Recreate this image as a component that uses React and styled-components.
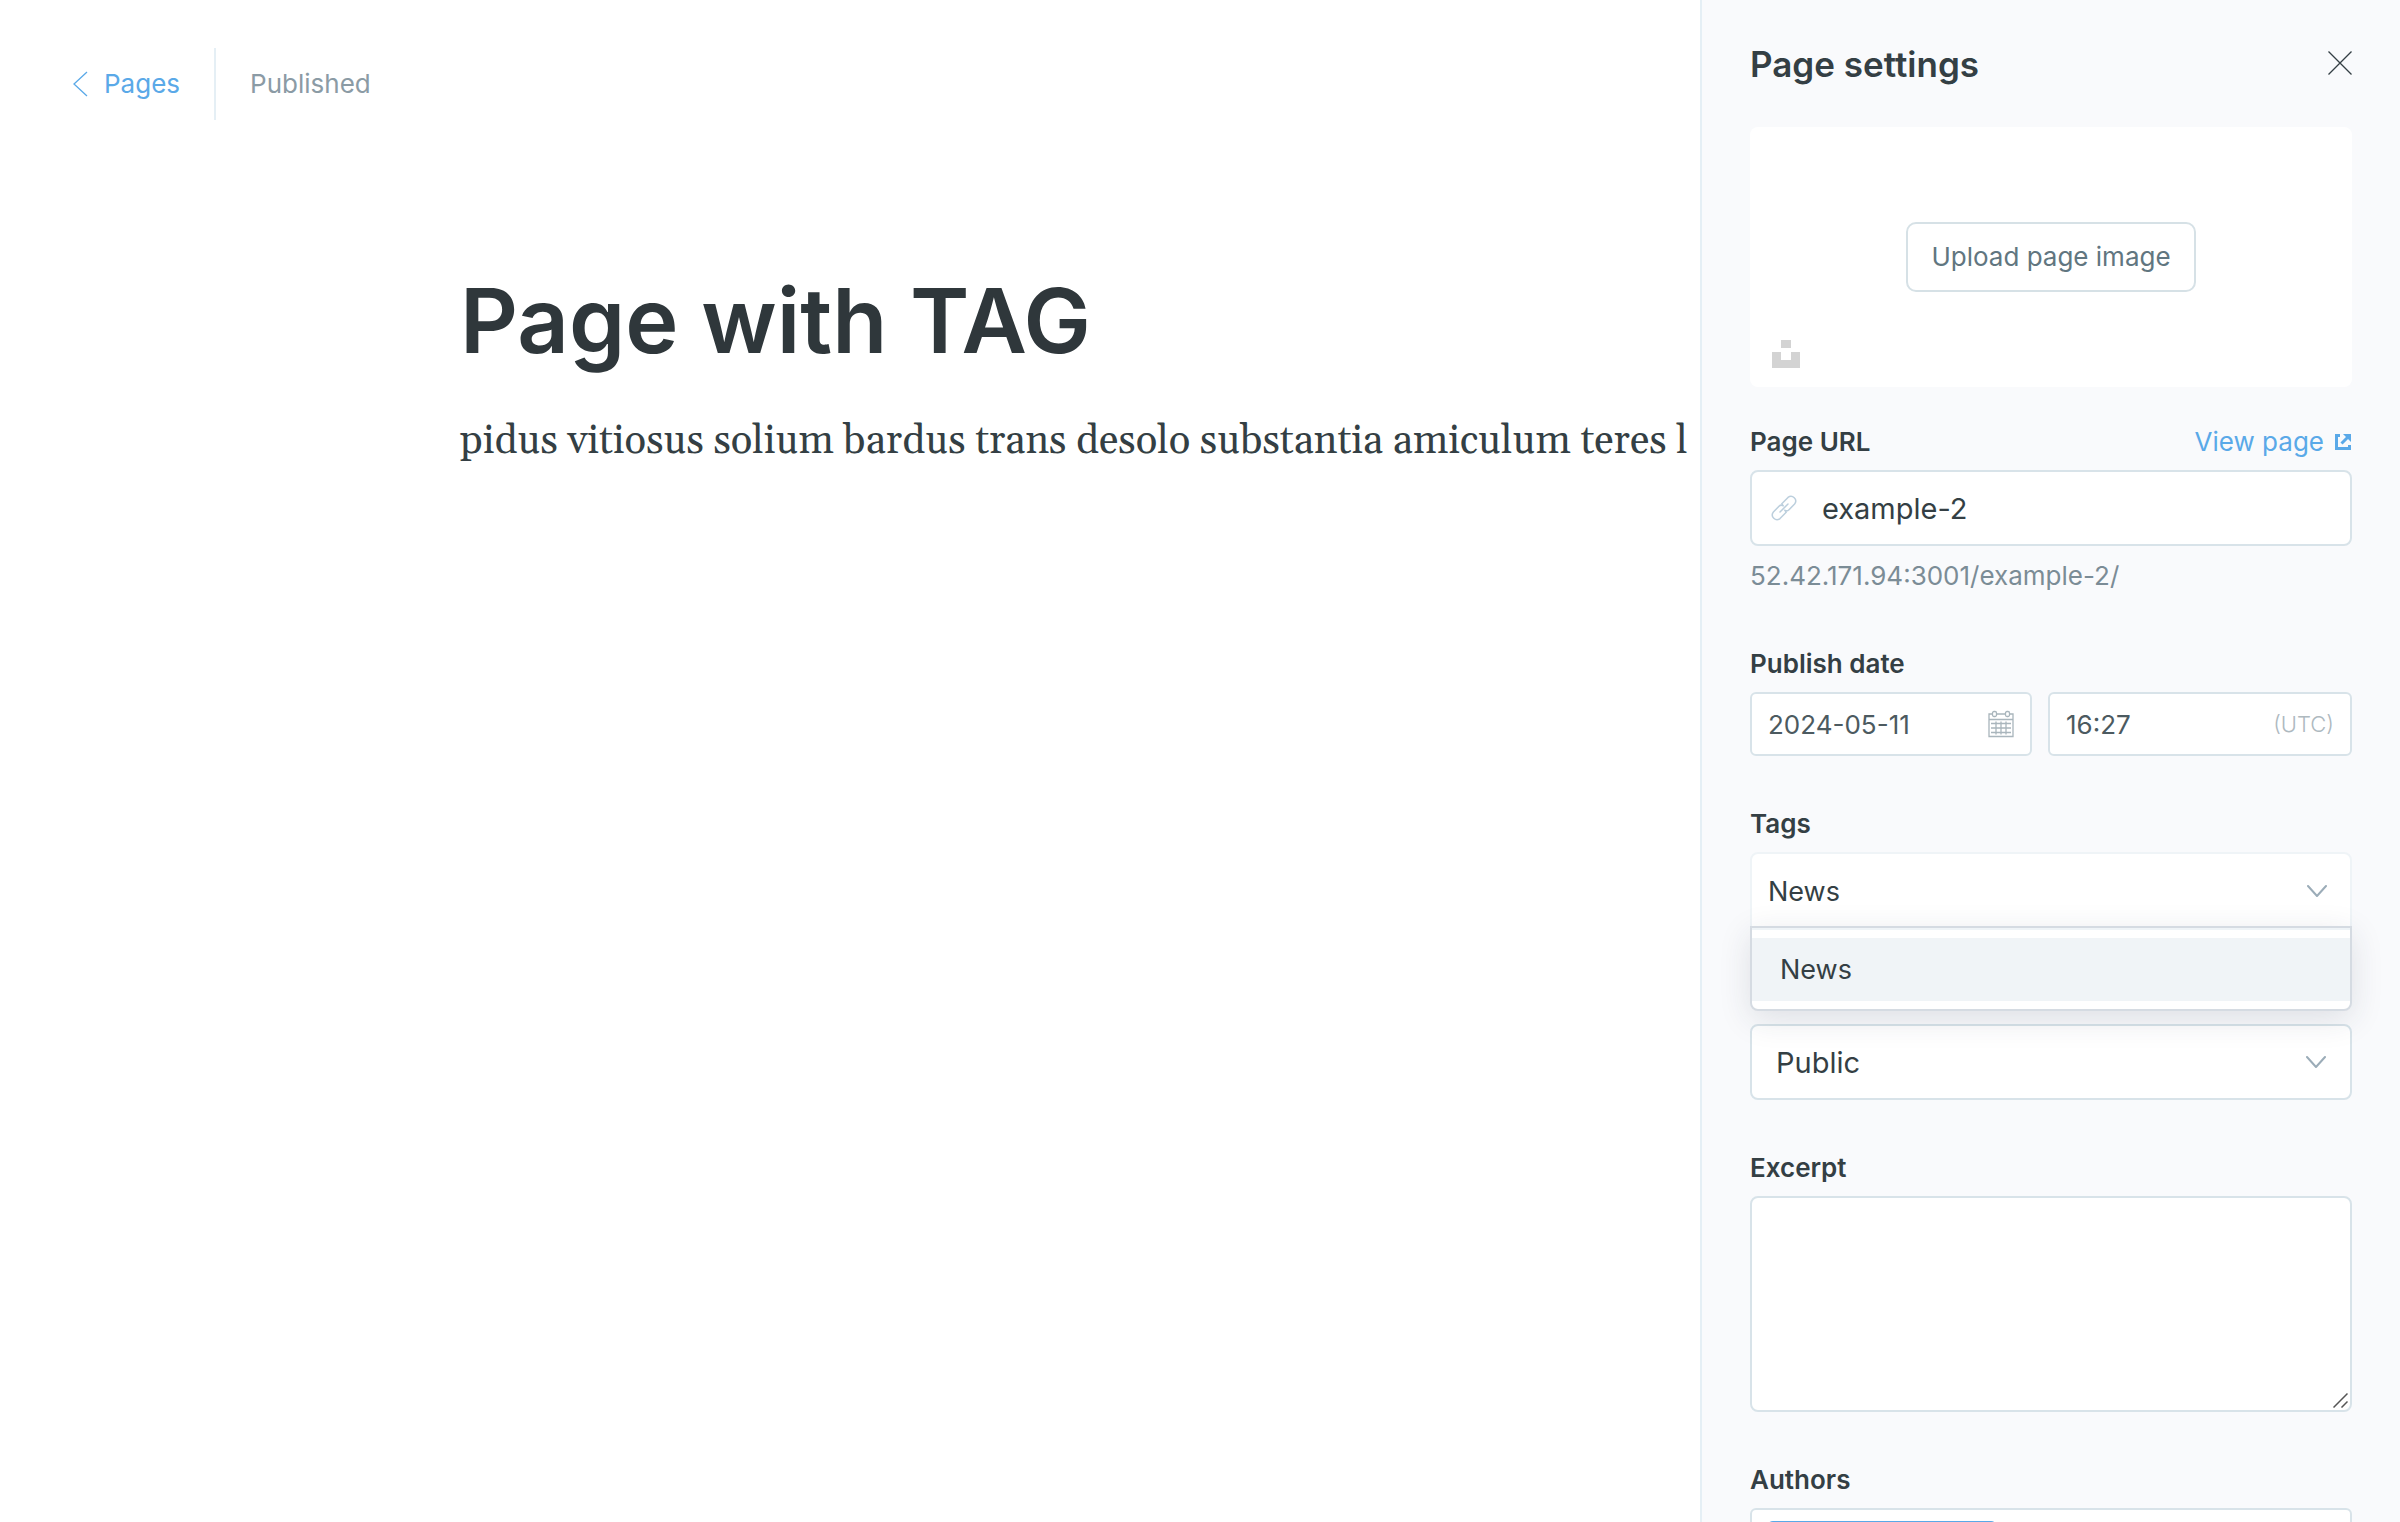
import React from "react";
import styled, { createGlobalStyle } from "styled-components";

const GlobalStyle = createGlobalStyle`
  *, *::before, *::after { box-sizing: border-box; }
  body { margin: 0; background: #fff; }
  body, button, input, select, textarea {
    font-family: Inter, "Liberation Sans", sans-serif;
  }
`;

const Screen = styled.div`
  display: flex;
  height: 100vh;
  overflow: hidden;
  color: #343f44;
`;

const Editor = styled.main`
  flex: 1;
  min-width: 0;
  overflow: hidden;
`;

const TopBar = styled.header`
  display: flex;
  align-items: center;
  height: 168px;
  padding-left: 72px;
`;

const BackLink = styled.a`
  display: flex;
  align-items: center;
  gap: 16px;
  height: 72px;
  padding-right: 34px;
  border-right: 2px solid #e5eff5;
  color: #5aa9e8;
  font-size: 26px;
  line-height: 32px;
  text-decoration: none;
`;

const Status = styled.span`
  padding-left: 34px;
  color: #8b9ba5;
  font-size: 26px;
  line-height: 32px;
`;

const Canvas = styled.article`
  padding: 98px 0 0 460px;
`;

const Title = styled.h1`
  margin: 0;
  color: #2f373b;
  font-size: 90px;
  font-weight: 600;
  line-height: 110px;
`;

const Body = styled.p`
  margin: 34px 0 0;
  font-family: Georgia, Gelasio, "Liberation Serif", serif;
  font-size: 40px;
  line-height: 64px;
  white-space: nowrap;
`;

const Panel = styled.aside`
  width: 700px;
  flex: none;
  padding: 0 48px;
  border-left: 2px solid #e5eff5;
  background: #f9fafc;
  overflow: hidden;
`;

const PanelHeader = styled.header`
  display: flex;
  align-items: center;
  justify-content: space-between;
  height: 127px;
`;

const PanelTitle = styled.h2`
  margin: 0;
  font-size: 35px;
  font-weight: 600;
  line-height: 40px;
`;

const CloseButton = styled.button`
  display: flex;
  padding: 0 0 2px;
  border: 0;
  background: none;
  color: #343f44;
`;

const ImageBox = styled.section`
  position: relative;
  display: flex;
  align-items: center;
  justify-content: center;
  height: 260px;
  margin-bottom: 39px;
  border-radius: 8px;
  background: #fff;
`;

const UploadButton = styled.button`
  height: 70px;
  padding: 0 23px;
  border: 2px solid #d6e1e6;
  border-radius: 10px;
  background: #fff;
  color: #617680;
  font-size: 26px;
  line-height: 32px;
`;

const UnsplashButton = styled.button`
  position: absolute;
  left: 22px;
  bottom: 19px;
  display: flex;
  padding: 0;
  border: 0;
  background: none;
  color: #d3d3d3;
`;

const Field = styled.div`
  position: relative;
  margin-bottom: 52px;
  padding-bottom: ${(p) => (p.$hinted ? "4px" : "0")};
`;

const LabelRow = styled.div`
  display: flex;
  align-items: center;
  justify-content: space-between;
  margin-bottom: 12px;
`;

const Label = styled.label`
  font-size: 26px;
  font-weight: 600;
  line-height: 32px;
`;

const ViewLink = styled.a`
  display: flex;
  align-items: center;
  gap: 10px;
  color: #5aa9e8;
  font-size: 26px;
  line-height: 32px;
  text-decoration: none;
`;

const InputShell = styled.div`
  display: flex;
  align-items: center;
  gap: ${(p) => (p.$compact ? "10px" : "24px")};
  min-width: 0;
  height: ${(p) => (p.$compact ? "64px" : "76px")};
  padding: 0 ${(p) => (p.$compact ? "16px" : "18px")};
  border: 2px solid #d8e3e9;
  border-radius: ${(p) => (p.$compact ? "6px" : "8px")};
  background: #fff;
  color: ${(p) => (p.$compact ? "#4c5a60" : "#343f44")};
  font-size: ${(p) => (p.$compact ? "26px" : "29px")};
`;

const TextInput = styled.input`
  flex: 1;
  width: 0;
  min-width: 0;
  padding: 0;
  border: 0;
  outline: 0;
  background: none;
  color: inherit;
  font-size: inherit;
`;

const Hint = styled.p`
  margin: 14px 0 0;
  color: #7b8c96;
  font-size: 26px;
  line-height: 32px;
`;

const DateRow = styled.div`
  display: grid;
  grid-template-columns: minmax(0, 282fr) minmax(0, 304fr);
  gap: 16px;
`;

const Zone = styled.small`
  color: #aeb9bf;
  font-size: 22px;
  font-weight: 300;
`;

const TagTrigger = styled.button`
  display: flex;
  align-items: center;
  justify-content: space-between;
  width: 100%;
  height: 78px;
  margin-bottom: -2px;
  padding: 0 23px 0 16px;
  border: 2px solid #eff4f7;
  border-radius: 8px 8px 0 0;
  background: #fff;
  color: #343f44;
  font-size: 27px;
`;

const TagMenu = styled.ul`
  position: absolute;
  z-index: 1;
  top: 118px;
  left: 0;
  right: 0;
  margin: 0;
  padding: 10px 0 8px;
  border: 2px solid #d5dbe2;
  border-radius: 0 0 8px 8px;
  background: #fff;
  box-shadow: inset 0 2px 0 #eff4f7, 0 8px 32px rgba(40, 50, 70, 0.13);
  list-style: none;
`;

const TagOption = styled.li`
  padding: 0 28px;
  background: #f0f4f7;
  font-size: 27px;
  line-height: 63px;
`;

const SelectShell = styled.div`
  display: grid;
  align-items: center;
  margin-top: 96px;

  > * { grid-area: 1 / 1; }
  > svg { justify-self: end; margin-right: 26px; pointer-events: none; }
`;

const Select = styled.select`
  appearance: none;
  width: 100%;
  height: 76px;
  padding: 0 60px 0 24px;
  border: 2px solid #d8e3e9;
  border-radius: 8px;
  background: #fff;
  color: #343f44;
  font-size: 29px;
`;

const TextAreaShell = styled.div`
  position: relative;
  display: flex;

  > svg { position: absolute; right: 4px; bottom: 4px; pointer-events: none; }
`;

const TextArea = styled.textarea`
  width: 100%;
  height: 216px;
  padding: 16px;
  border: 2px solid #d8e3e9;
  border-radius: 8px;
  background: #fff;
  font-size: 27px;
  resize: none;
`;

const TokenBox = styled.div`
  height: 76px;
  padding: 11px 15px;
  border: 2px solid #d8e3e9;
  border-radius: 6px;
  background: #fff;
`;

const Token = styled.div`
  width: 230px;
  height: 48px;
  border-radius: 6px;
  background: #5aa9e8;
`;

const Chevron = () => (
  <svg width="20" height="13" viewBox="0 0 20 13" fill="none" stroke="#9bacb8" strokeWidth="2" aria-hidden="true">
    <path d="M1 1l9 10 9-10" strokeLinecap="round" strokeLinejoin="round" />
  </svg>
);

const LinkIcon = () => (
  <svg width="28" height="28" viewBox="0 0 28 28" fill="none" stroke="#bccfdd" strokeWidth="1.5" strokeLinecap="round" strokeLinejoin="round" aria-hidden="true">
    <path d="M10 18l8-8" />
    <path d="M12.5 10.5 11.8 9.8 18 3.4a4.7 4.7 0 0 1 6.6 6.6L19 15.8a3.4 3.4 0 0 1-4.3.4" />
    <path d="M15.5 17.5l.7.7-6.2 6.4A4.7 4.7 0 0 1 3.4 18L9 12.2a3.4 3.4 0 0 1 4.3-.4" />
  </svg>
);

const CalendarIcon = () => (
  <svg width="26" height="28" viewBox="0 0 26 28" fill="none" stroke="#a9b5bc" strokeWidth="1.3" aria-hidden="true">
    <path d="M4 4H1v22.5h24V4h-3M9 4h8M1 9.5h24" />
    <rect x="4.5" y="1.5" width="4" height="5" rx="1.5" />
    <rect x="17.5" y="1.5" width="4" height="5" rx="1.5" />
    <path d="M3 13.5h20M3 18h20M3 22.5h20M8 11.5v13M13 11.5v13M18 11.5v13" />
  </svg>
);

export default function App() {
  return (
    <>
      <GlobalStyle />
      <Screen>
        <Editor>
          <TopBar>
            <BackLink href="#pages">
              <svg width="16" height="26" viewBox="0 0 16 26" fill="none" stroke="currentColor" strokeWidth="1.3" aria-hidden="true">
                <path d="M15 1L2 13l13 12" />
              </svg>
              Pages
            </BackLink>
            <Status>Published</Status>
          </TopBar>
          <Canvas>
            <Title>Page with TAG</Title>
            <Body>pidus vitiosus solium bardus trans desolo substantia amiculum teres l</Body>
          </Canvas>
        </Editor>

        <Panel>
          <PanelHeader>
            <PanelTitle>Page settings</PanelTitle>
            <CloseButton type="button" aria-label="Close">
              <svg width="24" height="24" viewBox="0 0 24 24" fill="none" stroke="currentColor" strokeWidth="1.3" aria-hidden="true">
                <path d="M0.5 0.5l23 23M23.5 0.5l-23 23" />
              </svg>
            </CloseButton>
          </PanelHeader>

          <ImageBox>
            <UploadButton type="button">Upload page image</UploadButton>
            <UnsplashButton type="button" aria-label="Unsplash">
              <svg width="28" height="28" viewBox="0 0 28 28" fill="currentColor" aria-hidden="true">
                <path d="M9 0h10v8H9zM0 12h9v8h10v-8h9v16H0z" />
              </svg>
            </UnsplashButton>
          </ImageBox>

          <Field $hinted>
            <LabelRow>
              <Label htmlFor="url">Page URL</Label>
              <ViewLink href="#view">
                View page
                <svg width="18" height="18" viewBox="0 0 18 18" fill="none" stroke="currentColor" strokeWidth="3" aria-hidden="true">
                  <path d="M6 2.5H2.5v13h13V12M7.5 10.5L14 4" />
                  <path d="M9 1h8v8z" fill="currentColor" stroke="none" />
                </svg>
              </ViewLink>
            </LabelRow>
            <InputShell>
              <LinkIcon />
              <TextInput id="url" defaultValue="example-2" />
            </InputShell>
            <Hint>52.42.171.94:3001/example-2/</Hint>
          </Field>

          <Field>
            <LabelRow>
              <Label htmlFor="date">Publish date</Label>
            </LabelRow>
            <DateRow>
              <InputShell $compact>
                <TextInput id="date" defaultValue="2024-05-11" />
                <CalendarIcon />
              </InputShell>
              <InputShell $compact>
                <TextInput aria-label="Publish time" defaultValue="16:27" />
                <Zone>(UTC)</Zone>
              </InputShell>
            </DateRow>
          </Field>

          <Field>
            <LabelRow>
              <Label htmlFor="tags">Tags</Label>
            </LabelRow>
            <TagTrigger id="tags" type="button" aria-haspopup="listbox" aria-expanded="true">
              News
              <Chevron />
            </TagTrigger>
            <TagMenu role="listbox" aria-label="Tags">
              <TagOption role="option" aria-selected="true">News</TagOption>
            </TagMenu>
          </Field>

          <Field>
            <SelectShell>
              <Select aria-label="Page access" defaultValue="public">
                <option value="public">Public</option>
              </Select>
              <Chevron />
            </SelectShell>
          </Field>

          <Field>
            <LabelRow>
              <Label htmlFor="excerpt">Excerpt</Label>
            </LabelRow>
            <TextAreaShell>
              <TextArea id="excerpt" />
              <svg width="15" height="15" viewBox="0 0 15 15" fill="none" stroke="#555" strokeWidth="1.5" aria-hidden="true">
                <path d="M0.5 14.5l14-14M8.5 14.5l6-6" />
              </svg>
            </TextAreaShell>
          </Field>

          <Field>
            <LabelRow>
              <Label as="span" id="authors">Authors</Label>
            </LabelRow>
            <TokenBox role="group" aria-labelledby="authors">
              <Token />
            </TokenBox>
          </Field>
        </Panel>
      </Screen>
    </>
  );
}
